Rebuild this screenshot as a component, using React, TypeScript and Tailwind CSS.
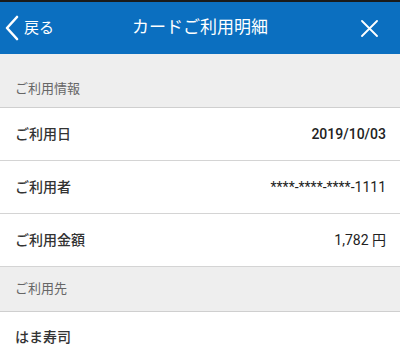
const font = { fontFamily: 'Roboto, "Noto Sans CJK JP", sans-serif' }

function Row({ label, value, bold }: { label: string; value: string; bold?: boolean }) {
    return (
        <div className="flex h-[53px] items-center justify-between border-b border-[#d4d4d4] bg-white pl-[15px] pr-[14px]">
            <span className="text-[14px] font-medium text-[#333]">{label}</span>
            <span className={`text-[14px] text-[#222] ${bold ? 'font-medium' : ''}`}>{value}</span>
        </div>
    )
}

export default function App() {
    return (
        <div className="flex h-[363px] w-[400px] flex-col overflow-hidden bg-white" style={font}>
            <div className="h-[2px] bg-[#1a1a1a]" />
            <header className="relative flex h-[52px] items-center justify-center bg-[#0b6fc0] text-white">
                <div className="absolute left-[4px] top-0 flex h-full items-center gap-[4px]">
                    <svg width="16" height="26" viewBox="0 0 16 26" fill="none">
                        <polyline points="13,2 3,13 13,24" stroke="white" strokeWidth="2.6" strokeLinecap="round" strokeLinejoin="round" />
                    </svg>
                    <span className="text-[15px]">戻る</span>
                </div>
                <h1 className="text-[17px]">カードご利用明細</h1>
                <svg width="17" height="17" viewBox="0 0 17 17" className="absolute right-[22px] top-[18px]">
                    <path d="M1 1 L16 16 M16 1 L1 16" stroke="white" strokeWidth="1.8" strokeLinecap="round" />
                </svg>
            </header>
            <div className="flex h-[54px] items-end border-b border-[#cfcfcf] bg-[#eeeeee] pb-[9px] pl-[15px]">
                <span className="text-[13px] text-[#666]">ご利用情報</span>
            </div>
            <Row label="ご利用日" value="2019/10/03" bold />
            <Row label="ご利用者" value="****-****-****-1111" />
            <Row label="ご利用金額" value="1,782 円" />
            <div className="flex h-[45px] items-center border-b border-[#cfcfcf] bg-[#eeeeee] pl-[15px]">
                <span className="text-[13px] text-[#666]">ご利用先</span>
            </div>
            <div className="flex h-[50px] items-center bg-white pl-[15px]">
                <span className="text-[14px] font-medium text-[#333]">はま寿司</span>
            </div>
        </div>
    )
}
